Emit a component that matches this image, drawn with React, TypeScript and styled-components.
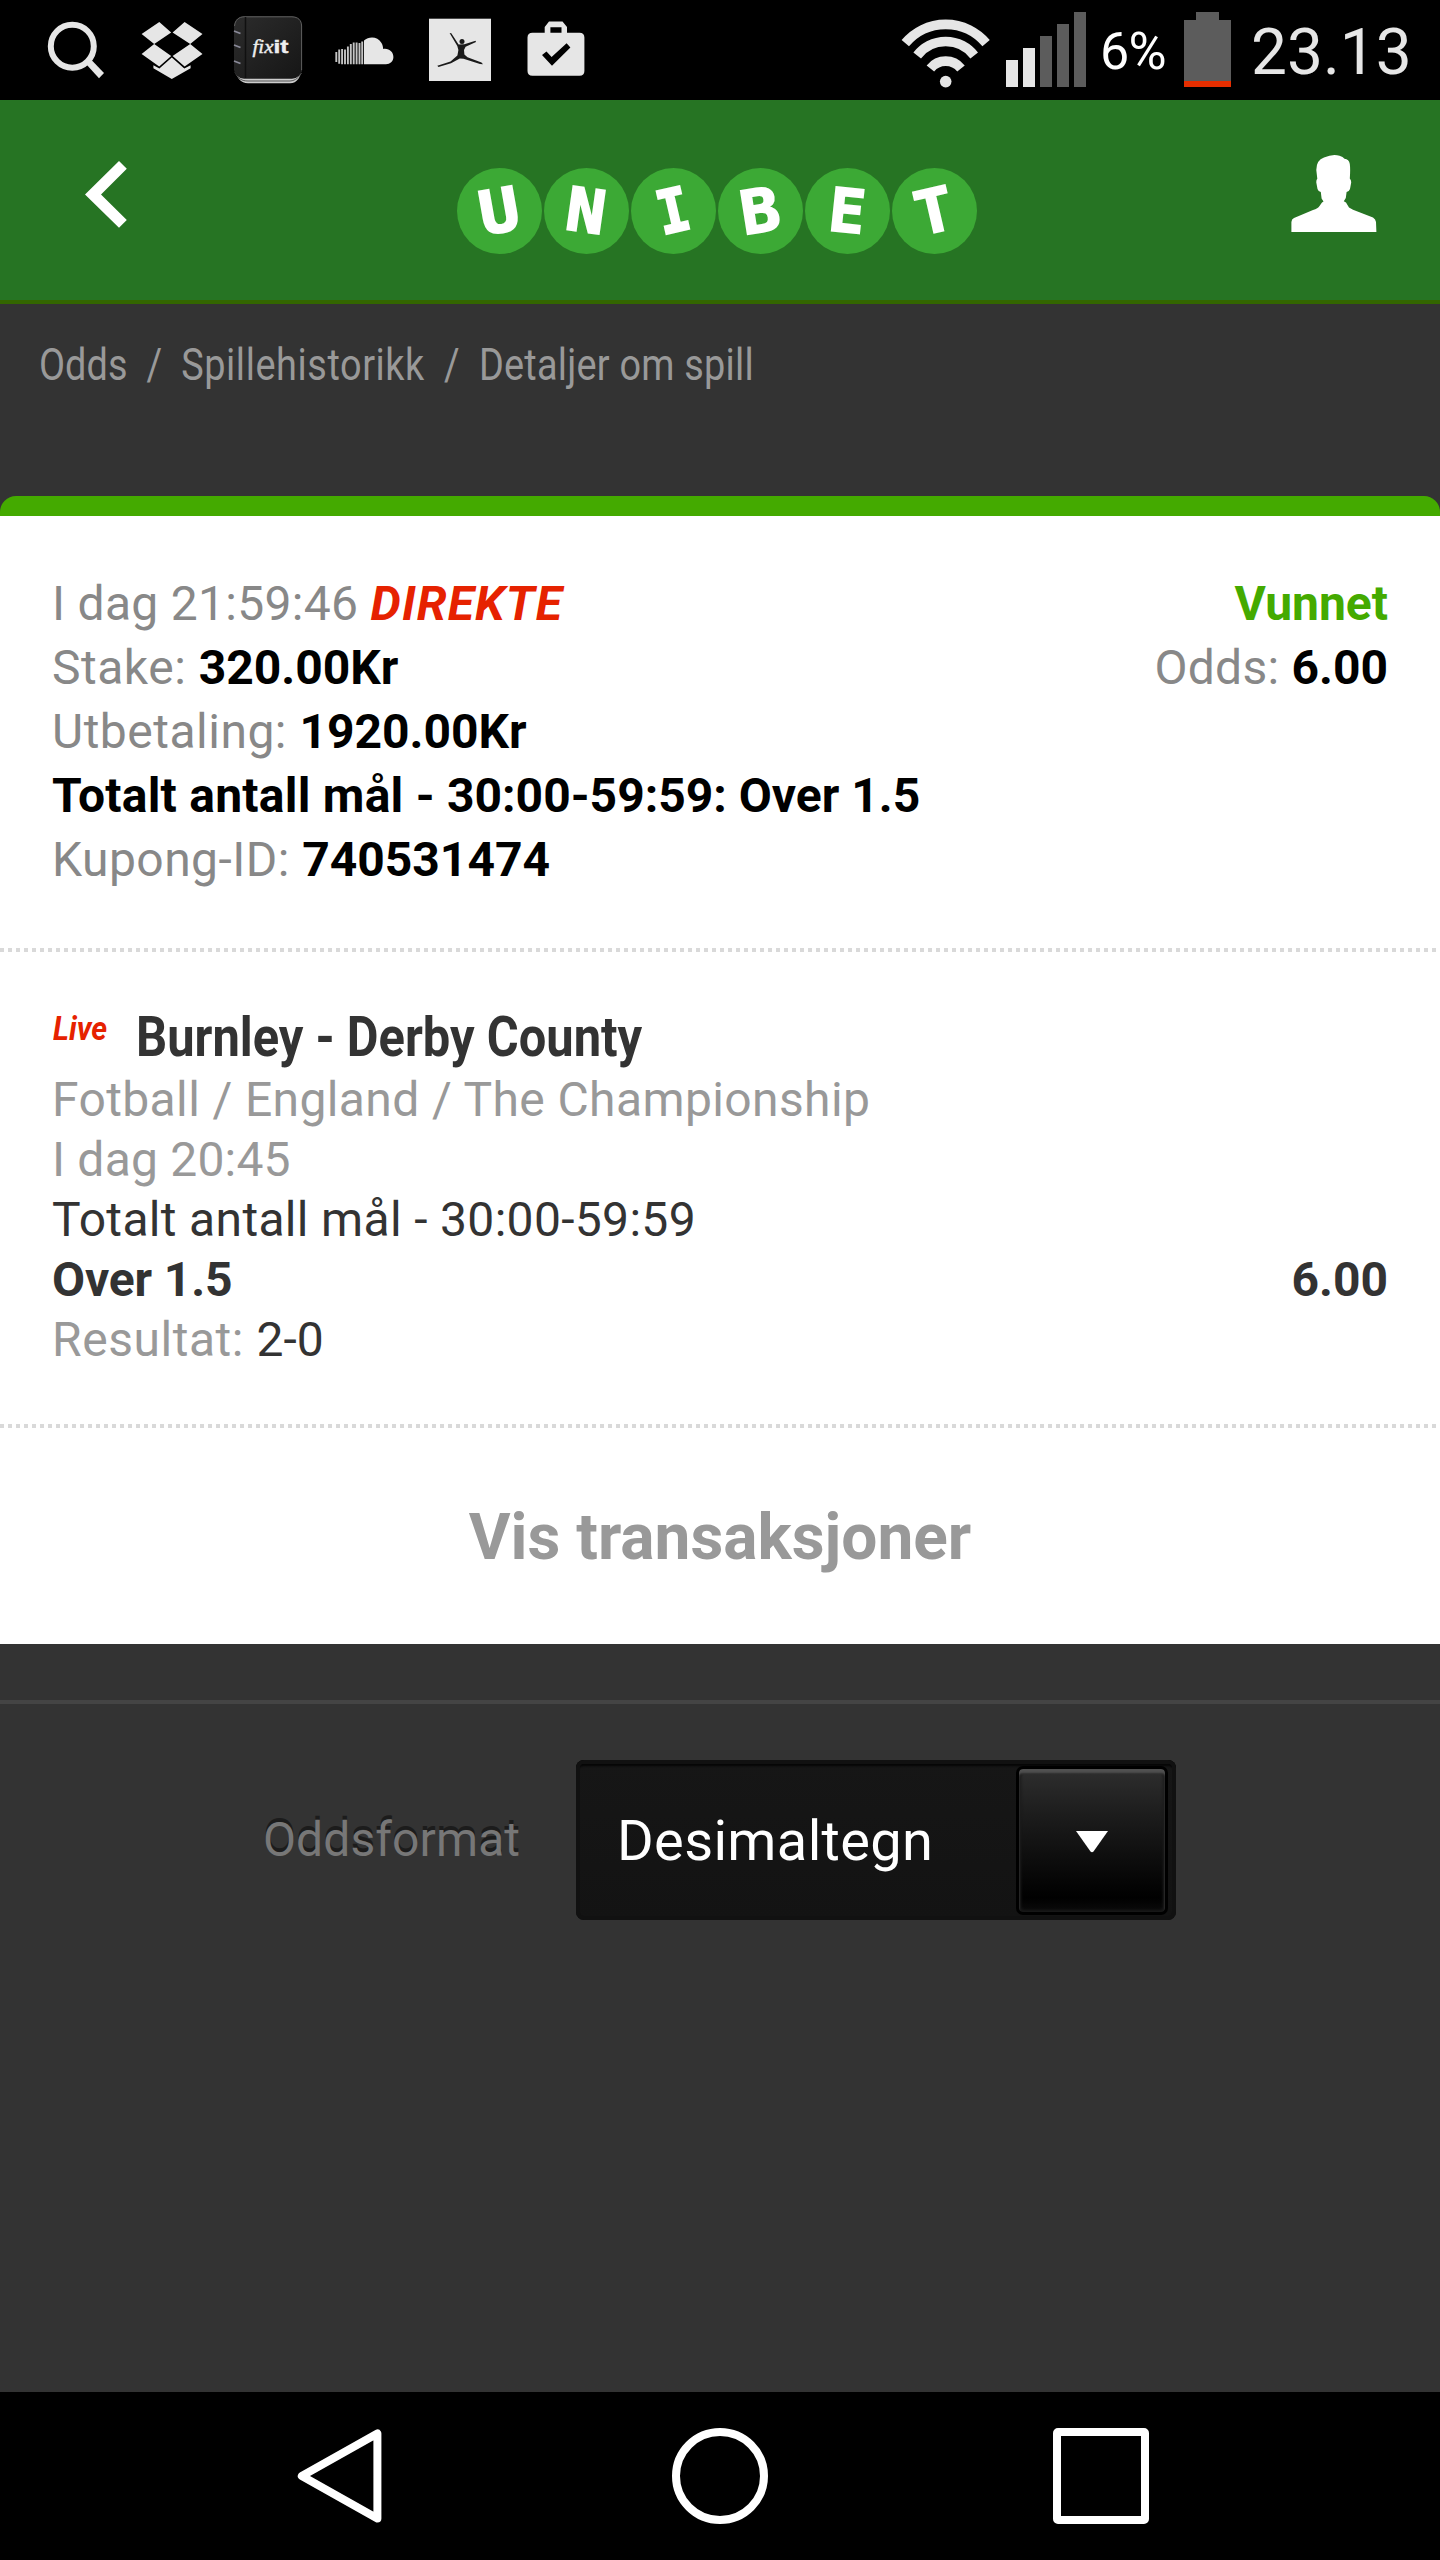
import React from "react";
import styled, { createGlobalStyle } from "styled-components";

const Global = createGlobalStyle`
  *, *::before, *::after { box-sizing: border-box; }
  html, body { margin: 0; padding: 0; background: #333; }
  body { font-family: Roboto, "Liberation Sans", sans-serif; }
`;

const Screen = styled.div`
  width: 1440px;
  height: 2560px;
  display: flex;
  flex-direction: column;
  background: #333;
  overflow: hidden;
`;

const StatusBar = styled.div`
  height: 100px;
  flex: none;
  display: flex;
  justify-content: space-between;
  background: #000;
  color: #e6e6e6;
`;

const Notifications = styled.div`
  display: flex;
  gap: 24px;
  padding-left: 40px;
`;

const SystemIcons = styled.div`
  display: flex;
  padding-right: 28px;
`;

const Glyph = styled.svg`
  display: block;
  flex: none;
`;

const BatteryLevel = styled.span`
  width: 78px;
  padding-left: 10px;
  font-size: 52px;
  line-height: 104px;
  letter-spacing: -0.8px;
  color: #fff;
  white-space: nowrap;
`;

const Clock = styled.span`
  width: 162px;
  padding-left: 1px;
  font-size: 64px;
  line-height: 105px;
  white-space: nowrap;
`;

const Header = styled.header`
  height: 204px;
  flex: none;
  display: flex;
  justify-content: space-between;
  padding: 0 63px 0 85px;
  background: #267423;
  border-bottom: 4px solid #360;
`;

const IconButton = styled.button<{ $top: number }>`
  align-self: flex-start;
  width: 86px;
  margin: ${(p) => p.$top}px 0 0;
  padding: 0;
  border: 0;
  background: none;
`;

const Logo = styled.div`
  display: flex;
  gap: 2px;
  padding: 68px 28px 0 0;
`;

const Ball = styled.span`
  width: 85px;
  height: 86px;
  border-radius: 50%;
  display: flex;
  align-items: center;
  justify-content: center;
  background: #3ca935;
`;

const BallLetter = styled.span<{ $turn: number; $wide: number }>`
  font: bold 60px/86px "DejaVu Sans Mono", monospace;
  color: #fff;
  -webkit-text-stroke: 2px #fff;
  transform: rotate(${(p) => p.$turn}deg) scaleX(${(p) => p.$wide});
`;

const Breadcrumb = styled.nav`
  height: 192px;
  flex: none;
  padding: 29px 0 0 39px;
  font-size: 44px;
  line-height: 64px;
  color: #999;
  white-space: pre;
`;

const Condensed = styled.span<{ $scale: number }>`
  display: inline-block;
  transform: scaleX(${(p) => p.$scale});
  transform-origin: 0 50%;
  white-space: pre;
`;

const Tracked = styled.span<{ $by: number }>`
  letter-spacing: ${(p) => p.$by}px;
`;

const CardTop = styled.div`
  height: 20px;
  flex: none;
  background: #4a0;
  border-radius: 16px 16px 0 0;
`;

const Section = styled.section<{ $height: number; $top: number }>`
  height: ${(p) => p.$height}px;
  flex: none;
  padding: ${(p) => p.$top}px 52px 0;
  background: #fff;
  font-size: 48px;
`;

const DottedRule = styled.div`
  height: 4px;
  flex: none;
  background: repeating-linear-gradient(90deg, #d9d9d9 0 4px, #fff 4px 8px);
`;

const Row = styled.div<{ $line: number; $color: string; $bold?: boolean }>`
  display: flex;
  justify-content: space-between;
  line-height: ${(p) => p.$line}px;
  color: ${(p) => p.$color};
  font-weight: ${(p) => (p.$bold ? 700 : 400)};
  white-space: pre;
`;

const Strong = styled.b`
  color: #000;
`;

const Dark = styled.span`
  color: #333;
`;

const LiveWord = styled.b`
  font-style: italic;
  letter-spacing: 1.15px;
  color: #e62200;
`;

const Won = styled.b`
  color: #4a0;
`;

const EventTitle = styled.div`
  display: flex;
  height: 62px;
  padding-left: 1px;
  line-height: 58px;
  color: #333;
`;

const LiveTag = styled.span`
  width: 83px;
  font-size: 34px;
  line-height: 40px;
  font-weight: 700;
  font-style: italic;
  color: #e62200;
`;

const EventName = styled.span`
  font-size: 56px;
  font-weight: 700;
`;

const ShowTransactions = styled.button`
  height: 216px;
  flex: none;
  padding: 2px 0 0;
  border: 0;
  background: #fff;
  color: #999;
  font: bold 64px Roboto, sans-serif;
`;

const Rule = styled.div`
  height: 4px;
  flex: none;
  margin-top: 56px;
  background: #444;
`;

const FormatRow = styled.div`
  flex: 1;
  display: flex;
  align-items: flex-start;
  padding: 56px 0 0 263px;
`;

const FormatLabel = styled.label`
  width: 313px;
  font-size: 48px;
  line-height: 160px;
  letter-spacing: 0.1px;
  color: #777;
  text-shadow: 0 -4px 0 #1c1c1c;
`;

const Select = styled.div`
  width: 600px;
  height: 160px;
  display: flex;
  justify-content: space-between;
  padding: 6px 8px 5px 41px;
  border-radius: 8px;
  background: linear-gradient(#161616, #131313);
  box-shadow: inset 0 0 0 4px #111, inset 0 6px 2px #060606;
`;

const SelectValue = styled.span`
  font-size: 56px;
  line-height: 150px;
  letter-spacing: 0.35px;
  color: #fff;
`;

const SelectButton = styled.div`
  width: 152px;
  height: 149px;
  display: flex;
  align-items: center;
  justify-content: center;
  padding-top: 2px;
  border: 3px solid #000;
  border-radius: 7px;
  background: linear-gradient(#2e2e2e, #1b1b1b 35%, #000 90%, #0b0b0b);
  box-shadow: inset 0 4px 2px #505050, inset 0 0 3px 2px #1a1a1a;
`;

const NavBar = styled.nav`
  height: 168px;
  flex: none;
  display: flex;
  justify-content: space-between;
  padding: 36px 291px 0 289px;
  background: #000;
`;

const letters = [
  { ch: "U", turn: -10, wide: 1.1 },
  { ch: "N", turn: 8, wide: 1.08 },
  { ch: "I", turn: -13, wide: 0.9 },
  { ch: "B", turn: -9, wide: 1.08 },
  { ch: "E", turn: 6, wide: 1.0 },
  { ch: "T", turn: -13, wide: 1.05 },
];

const signal = [
  { x: 1006, top: 60, fill: "#e6e6e6" },
  { x: 1023, top: 48, fill: "#e6e6e6" },
  { x: 1040, top: 36, fill: "#5c5c5c" },
  { x: 1057, top: 24, fill: "#5c5c5c" },
  { x: 1074, top: 12, fill: "#5c5c5c" },
];

function NotificationIcons() {
  return (
    <Notifications>
      <Glyph width="72" height="100" viewBox="40 0 72 100">
        <circle cx="72.3" cy="46.2" r="21.5" fill="none" stroke="#e6e6e6" strokeWidth="6" />
        <path d="M86 64 L91.5 60 L104 73 L99 78.3Z" fill="#e6e6e6" />
      </Glyph>
      <Glyph width="72" height="100" viewBox="136 0 72 100">
        <path
          fill="#e6e6e6"
          d="M159.3 22L171.2 32.5L154.2 44L141.6 34ZM184.6 22L202.5 34L190.2 44L172.6 32.5ZM154.2 44L171.2 56L159.2 66.5L141.6 54ZM190.2 44L202.5 54L184.6 66.5L172.6 56ZM153.4 65.3L159.4 68.6L171.8 57.6L184.3 68.6L190.6 65.3V68.3L171.8 79L153.4 68.3Z"
        />
      </Glyph>
      <Glyph width="72" height="100" viewBox="232 0 72 100">
        <defs>
          <linearGradient id="cover" x1="0" y1="0" x2="1" y2="1">
            <stop offset="0" stopColor="#2c2c2c" />
            <stop offset="1" stopColor="#161616" />
          </linearGradient>
        </defs>
        <path d="M234 66C236 78 241 83.3 248 83.3H290C297 83 301 78 302 66Z" fill="#ccc" />
        <path d="M235 72C238 79 242 81 248 81H290C296 80.6 299 77 301.5 73" fill="none" stroke="#555" strokeWidth="1" />
        <rect x="234" y="16.3" width="68" height="62.5" rx="10" fill="url(#cover)" />
        <path d="M234.5 26C235 20 239 16.8 244 16.8H292C298 17 301.5 20 301.6 26V70" fill="none" stroke="#666" strokeWidth="0.9" />
        <path d="M245.5 17V78" stroke="#101010" strokeWidth="1.5" />
        <path d="M234 31L240.5 33.5M234 45L240.5 47.5M234 61L240.5 63.5" stroke="#8a8a99" strokeWidth="1.8" />
        <text x="252.5" y="52.5" fontFamily="Liberation Serif, serif" fontStyle="italic" fontSize="19" fill="#eee" stroke="#eee" strokeWidth="0.4" textLength="21" lengthAdjust="spacingAndGlyphs">fix</text>
        <text x="273.5" y="52.5" fontFamily="Liberation Sans, sans-serif" fontWeight="700" fontSize="18" fill="#eee" stroke="#eee" strokeWidth="0.4" textLength="15" lengthAdjust="spacingAndGlyphs">it</text>
      </Glyph>
      <Glyph width="72" height="100" viewBox="328 0 72 100">
        <path
          fill="#e6e6e6"
          d="M364 64.2V40.5C369 36.3 377.5 36.2 381.5 43C382.5 44.8 383 46.5 383.2 49C389 48 393.4 52 393.4 57C393.4 61.5 390 64.2 386 64.2Z"
        />
        <path
          d="M336.3 52V62M339.2 49.5V63.8M342.1 49V64.2M345 49.5V64.2M347.9 46.5V64.2M350.8 44V64.2M353.7 42.5V64.2M356.6 42.5V64.2M359.5 43V64.2M362.2 41.5V64.2"
          stroke="#c4c4c4"
          strokeWidth="1.9"
        />
      </Glyph>
      <Glyph width="72" height="100" viewBox="424 0 72 100">
        <rect x="429" y="18.7" width="62" height="62.3" fill="#e6e6e6" />
        <circle cx="462" cy="41.6" r="2.5" fill="#1a1a1a" />
        <path
          fill="#1a1a1a"
          d="M449.6 33L451.3 33.3L458.6 44.6L464.4 44.2L475.5 40.8L476 42L465.6 46.8L464 50L464.4 54.5L467.5 57.3L481.5 62.5L483 64.3L480 64L463.5 58.8L459.8 58.5L451 63.3L438.5 67L437.3 65.8L450.5 61.5L457.4 55.6L458.4 50L457.3 46Z"
        />
      </Glyph>
      <Glyph width="72" height="100" viewBox="520 0 72 100">
        <path
          fill="#e6e6e6"
          fillRule="evenodd"
          d="M532.5 32.7H544.7V27L549 21.4H562.5L567 27V32.7H579.5Q584.4 32.7 584.4 37.5V71Q584.4 75.7 579.5 75.7H532.5Q527.5 75.7 527.5 71V37.5Q527.5 32.7 532.5 32.7ZM550.4 27.2V32.7H561.5V27.2Z"
        />
        <path d="M542 55L546.5 51.5L551.6 57L566.6 43.2L570.4 47.5L552 65.7Z" fill="#000" />
      </Glyph>
    </Notifications>
  );
}

function SystemStatus() {
  return (
    <SystemIcons>
      <Glyph width="190" height="100" viewBox="900 0 190 100">
        <g fill="none" stroke="#e6e6e6" strokeWidth="9.6">
          <path d="M905.3 43.2A52.8 52.8 0 0 1 986.1 43.2" />
          <path d="M917.2 55.5A36 36 0 0 1 974.2 55.5" />
          <path d="M930.4 68.5A19.6 19.6 0 0 1 961 68.5" />
        </g>
        <circle cx="945.7" cy="81.6" r="5.8" fill="#e6e6e6" />
        {signal.map((b) => (
          <rect key={b.x} x={b.x} y={b.top} width="12" height={87 - b.top} fill={b.fill} />
        ))}
      </Glyph>
      <BatteryLevel>6%</BatteryLevel>
      <Glyph width="82" height="100" viewBox="1168 0 82 100">
        <path d="M1184 20H1196V12H1219V20H1231V81H1184Z" fill="#5c5c5c" />
        <rect x="1184" y="81" width="47" height="6" fill="#e62e00" />
      </Glyph>
      <Clock>23.13</Clock>
    </SystemIcons>
  );
}

export default function App() {
  return (
    <>
      <Global />
      <Screen>
        <StatusBar>
          <NotificationIcons />
          <SystemStatus />
        </StatusBar>

        <Header>
          <IconButton $top={61} aria-label="Tilbake">
            <Glyph width="42" height="67" viewBox="0 0 42 67">
              <path d="M0 33.4L34 0L41.8 7.7L16 33.4L41.8 59L34 66.8Z" fill="#fff" />
            </Glyph>
          </IconButton>
          <Logo>
            {letters.map((l) => (
              <Ball key={l.ch}>
                <BallLetter $turn={l.turn} $wide={l.wide}>{l.ch}</BallLetter>
              </Ball>
            ))}
          </Logo>
          <IconButton $top={54} aria-label="Min konto">
            <Glyph width="86" height="78" viewBox="0 0 86 78">
              <path
                fill="#fff"
                d="M0.4 78V68Q0.6 65 3 64L22 56Q27 54.5 28.5 52L31 48.5L32.5 47.5L30.6 44.5L29.8 38Q27.5 38 26.5 35L25.3 28.5Q25.2 26 26.3 24.8L25.3 16Q25.3 6 33 3.5Q42 -0.5 48.5 1.8Q52 3 53.5 4.8Q58 5 58.8 10Q59.5 15 58.8 24.5Q60.3 26 60.2 28.5L59 35Q58 37.8 55.6 38L54.8 44L52.8 47.3L55 48.5L58 53.5L62 55.8L82 63.5Q84.6 65 85 68L85.4 78Z"
              />
            </Glyph>
          </IconButton>
        </Header>

        <Breadcrumb>
          <Condensed $scale={0.86}>
            <Tracked $by={0.1}>Odds  /  </Tracked>
            <Tracked $by={0.68}>Spillehistorikk</Tracked>
            <Tracked $by={0.2}>  /  </Tracked>
            <Tracked $by={0.28}>Detaljer om spill</Tracked>
          </Condensed>
        </Breadcrumb>

        <CardTop />
        <Section $height={432} $top={56}>
          <Row $line={64} $color="#888">
            <span><Tracked $by={0.3}>I dag 21:59:46 </Tracked><LiveWord>DIREKTE</LiveWord></span>
            <Won>Vunnet</Won>
          </Row>
          <Row $line={64} $color="#888">
            <span><Tracked $by={0.5}>Stake: </Tracked><Strong>320.00Kr</Strong></span>
            <span><Tracked $by={0.25}>Odds: </Tracked><Strong>6.00</Strong></span>
          </Row>
          <Row $line={64} $color="#888">
            <span><Tracked $by={0.5}>Utbetaling: </Tracked><Strong>1920.00Kr</Strong></span>
          </Row>
          <Row $line={64} $color="#000" $bold>
            <span><Tracked $by={0.24}>Totalt antall mål - </Tracked>30:00-59:59: Over 1.5</span>
          </Row>
          <Row $line={64} $color="#888">
            <span><Tracked $by={0.45}>Kupong-ID: </Tracked><Strong>740531474</Strong></span>
          </Row>
        </Section>
        <DottedRule />
        <Section $height={472} $top={56}>
          <EventTitle>
            <LiveTag><Condensed $scale={0.89}>Live</Condensed></LiveTag>
            <EventName><Condensed $scale={0.872}>Burnley - Derby County</Condensed></EventName>
          </EventTitle>
          <Row $line={60} $color="#999">
            <Tracked $by={0.38}>Fotball / England / The Championship</Tracked>
          </Row>
          <Row $line={60} $color="#999">
            <Tracked $by={0.2}>I dag 20:45</Tracked>
          </Row>
          <Row $line={60} $color="#333">
            <Tracked $by={0.33}>Totalt antall mål - 30:00-59:59</Tracked>
          </Row>
          <Row $line={60} $color="#333" $bold>
            <Tracked $by={-0.15}>Over 1.5</Tracked>
            <span>6.00</span>
          </Row>
          <Row $line={60} $color="#999">
            <span><Tracked $by={0.55}>Resultat: </Tracked><Dark>2-0</Dark></span>
          </Row>
        </Section>
        <DottedRule />
        <ShowTransactions>Vis transaksjoner</ShowTransactions>

        <Rule />
        <FormatRow>
          <FormatLabel>Oddsformat</FormatLabel>
          <Select>
            <SelectValue>Desimaltegn</SelectValue>
            <SelectButton>
              <Glyph width="34" height="22" viewBox="0 0 34 22">
                <path d="M1 0H33L18.5 20.5Q17 22 15.5 20.5Z" fill="#fff" />
              </Glyph>
            </SelectButton>
          </Select>
        </FormatRow>

        <NavBar>
          <Glyph width="98" height="96" viewBox="289 0 98 96">
            <path d="M301.8 48L377.4 5.5V90.5Z" fill="none" stroke="#fff" strokeWidth="8" strokeLinejoin="round" />
          </Glyph>
          <Glyph width="96" height="96" viewBox="0 0 96 96">
            <circle cx="48" cy="48" r="44" fill="none" stroke="#fff" strokeWidth="8" />
          </Glyph>
          <Glyph width="96" height="96" viewBox="0 0 96 96">
            <rect x="4" y="4" width="88" height="88" rx="1" fill="none" stroke="#fff" strokeWidth="8" />
          </Glyph>
        </NavBar>
      </Screen>
    </>
  );
}
